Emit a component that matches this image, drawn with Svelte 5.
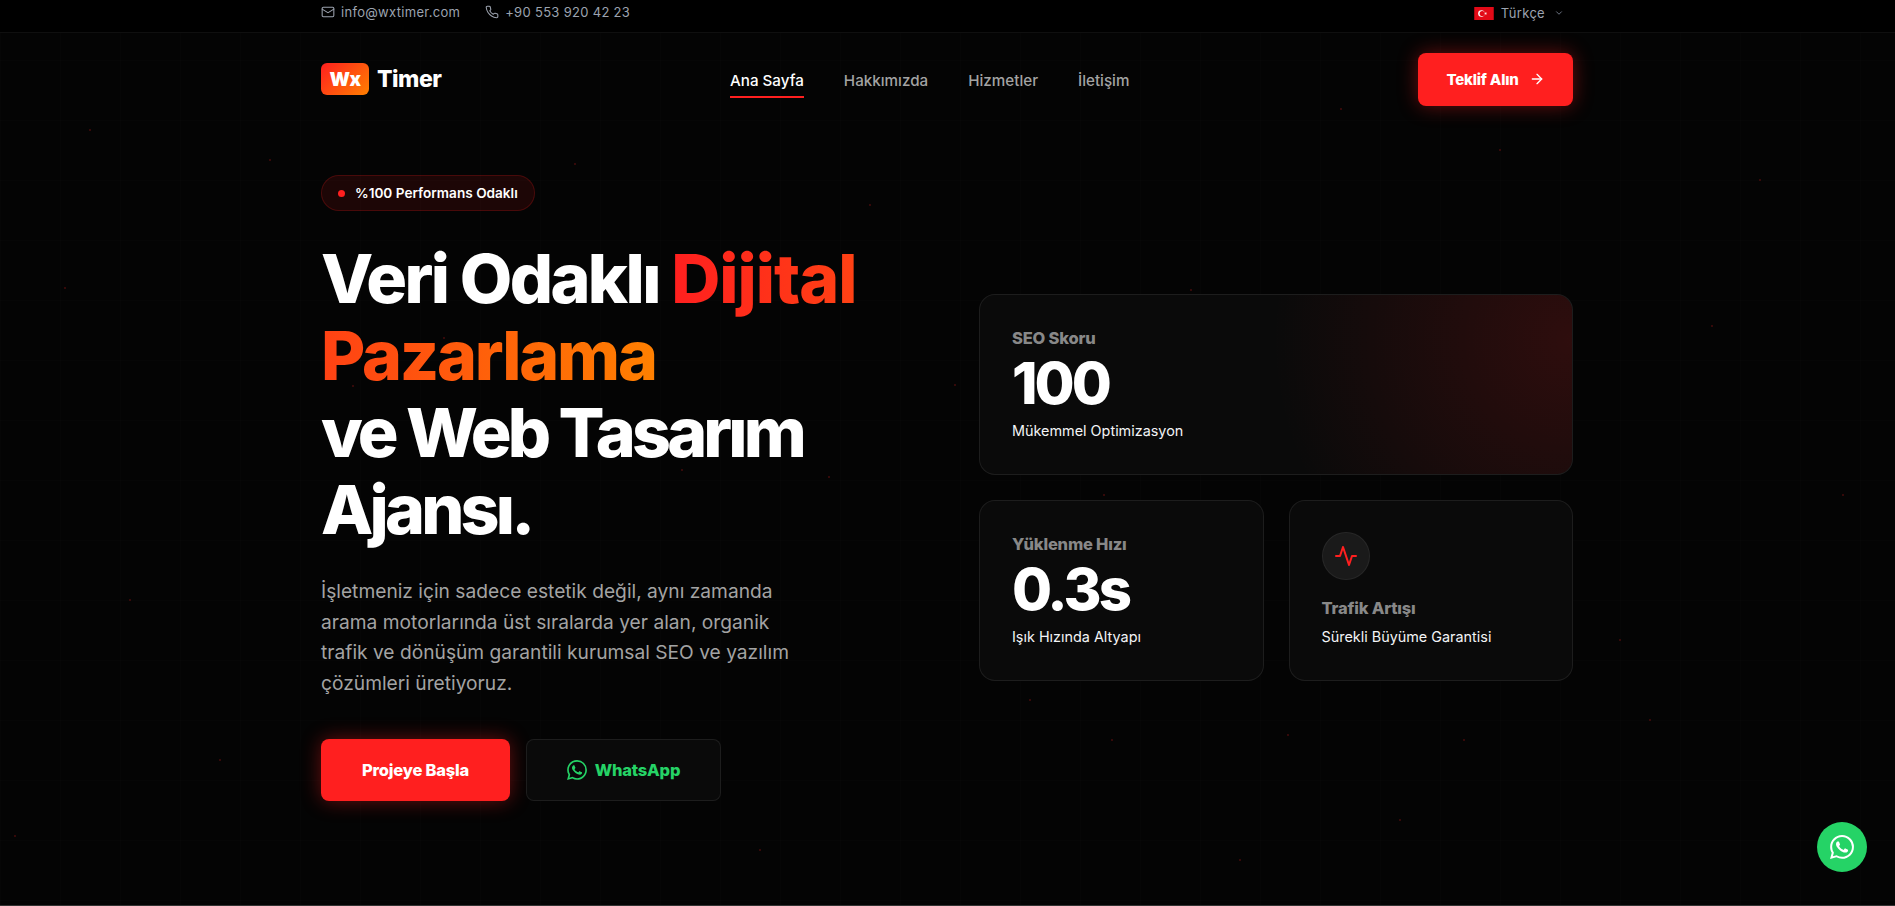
<script>
	const dots = [
		[270, 160], [65, 288], [955, 385], [1843, 495], [829, 477], [1712, 326], [1112, 740], [1288, 735],
		[1464, 740], [15, 836], [1341, 109], [1191, 290], [1104, 495], [1215, 528], [444, 338], [353, 386],
		[575, 164], [682, 470], [130, 600], [1650, 720], [1760, 180], [1500, 150], [1030, 700], [760, 850],
		[220, 760], [1240, 860], [1620, 640], [90, 130], [1400, 820], [870, 205]
	]
</script>

<div class="page">
	<svg class="particles" width="1895" height="906" aria-hidden="true">
		{#each dots as d}
			<circle cx={d[0]} cy={d[1]} r="0.8" fill="#ff1f1f" opacity="0.45" />
		{/each}
	</svg>

	<div class="topbar">
		<div class="wrap topbar-in">
			<div class="contacts">
				<span class="contact">
					<svg width="14" height="14" viewBox="0 0 24 24" fill="none" stroke="currentColor" stroke-width="1.8" stroke-linecap="round" stroke-linejoin="round"><rect x="2" y="4" width="20" height="16" rx="2" /><path d="m22 7-8.97 5.7a1.94 1.94 0 0 1-2.06 0L2 7" /></svg>
					info@wxtimer.com
				</span>
				<span class="contact">
					<svg width="14" height="14" viewBox="0 0 24 24" fill="none" stroke="currentColor" stroke-width="1.8" stroke-linecap="round" stroke-linejoin="round"><path d="M22 16.92v3a2 2 0 0 1-2.18 2 19.79 19.79 0 0 1-8.63-3.07 19.5 19.5 0 0 1-6-6 19.79 19.79 0 0 1-3.07-8.67A2 2 0 0 1 4.11 2h3a2 2 0 0 1 2 1.72 12.84 12.84 0 0 0 .7 2.81 2 2 0 0 1-.45 2.11L8.09 9.91a16 16 0 0 0 6 6l1.27-1.27a2 2 0 0 1 2.11-.45 12.84 12.84 0 0 0 2.81.7A2 2 0 0 1 22 16.92z" /></svg>
					+90 553 920 42 23
				</span>
			</div>
			<div class="lang">
				<svg class="flag" width="20" height="13" viewBox="0 0 30 20"><rect width="30" height="20" fill="#e30a17" /><circle cx="11" cy="10" r="5" fill="#fff" /><circle cx="12.3" cy="10" r="4" fill="#e30a17" /><path d="m15.2 10 4.4-1.4-2.7 3.7V7.7l2.7 3.7z" fill="#fff" /></svg>
				<span>Türkçe</span>
				<svg class="chev" width="10" height="10" viewBox="0 0 24 24" fill="none" stroke="currentColor" stroke-width="2.4" stroke-linecap="round" stroke-linejoin="round"><path d="m6 9 6 6 6-6" /></svg>
			</div>
		</div>
	</div>

	<header class="wrap nav">
		<div class="logo">
			<span class="logo-mark">Wx</span>
			<span class="logo-text">Timer</span>
		</div>
		<nav>
			<a class="active" href="#home">Ana Sayfa</a>
			<a href="#about">Hakkımızda</a>
			<a href="#services">Hizmetler</a>
			<a href="#contact">İletişim</a>
		</nav>
		<a class="cta" href="#quote">
			Teklif Alın
			<svg width="16" height="16" viewBox="0 0 24 24" fill="none" stroke="currentColor" stroke-width="2" stroke-linecap="round" stroke-linejoin="round"><path d="M5 12h14" /><path d="m12 5 7 7-7 7" /></svg>
		</a>
	</header>

	<main class="wrap hero">
		<section class="left">
			<div class="badge"><i class="dot"></i>%100 Performans Odaklı</div>
			<h1>Veri Odaklı <span class="grad"><span class="loose">Dijital</span> Pazarlama</span><br /><span class="rest">ve Web Tasarım Ajansı.</span></h1>
			<p class="lead">İşletmeniz için sadece estetik değil, aynı zamanda arama motorlarında üst sıralarda yer alan, organik trafik ve dönüşüm garantili kurumsal SEO ve yazılım çözümleri üretiyoruz.</p>
			<div class="actions">
				<a class="btn primary" href="#start">Projeye Başla</a>
				<a class="btn ghost" href="#wa">
					<svg width="20" height="20" viewBox="0 0 24 24" fill="currentColor"><path d="M17.472 14.382c-.297-.149-1.758-.867-2.03-.967-.273-.099-.471-.148-.67.15-.197.297-.767.966-.94 1.164-.173.199-.347.223-.644.075-.297-.15-1.255-.463-2.39-1.475-.883-.788-1.48-1.761-1.653-2.059-.173-.297-.018-.458.13-.606.134-.133.298-.347.446-.52.149-.174.198-.298.298-.497.099-.198.05-.371-.025-.52-.075-.149-.669-1.612-.916-2.207-.242-.579-.487-.5-.669-.51-.173-.008-.371-.01-.57-.01-.198 0-.52.074-.792.372-.272.297-1.04 1.016-1.04 2.479 0 1.462 1.065 2.875 1.213 3.074.149.198 2.096 3.2 5.077 4.487.709.306 1.262.489 1.694.625.712.227 1.36.195 1.871.118.571-.085 1.758-.719 2.006-1.413.248-.694.248-1.289.173-1.413-.074-.124-.272-.198-.57-.347m-5.421 7.403h-.004a9.87 9.87 0 01-5.031-1.378l-.361-.214-3.741.982.998-3.648-.235-.374a9.86 9.86 0 01-1.51-5.26c.001-5.45 4.436-9.884 9.888-9.884 2.64 0 5.122 1.03 6.988 2.898a9.825 9.825 0 012.893 6.994c-.003 5.45-4.437 9.884-9.885 9.884m8.413-18.297A11.815 11.815 0 0012.05 0C5.495 0 .16 5.335.157 11.892c0 2.096.547 4.142 1.588 5.945L.057 24l6.305-1.654a11.882 11.882 0 005.683 1.448h.005c6.554 0 11.89-5.335 11.893-11.893a11.821 11.821 0 00-3.48-8.413z" /></svg>
					WhatsApp
				</a>
			</div>
		</section>

		<section class="cards">
			<div class="card wide">
				<div class="label">SEO Skoru</div>
				<div class="value">100</div>
				<div class="sub">Mükemmel Optimizasyon</div>
			</div>
			<div class="card">
				<div class="label">Yüklenme Hızı</div>
				<div class="value">0.3s</div>
				<div class="sub">Işık Hızında Altyapı</div>
			</div>
			<div class="card">
				<div class="pulse">
					<svg width="24" height="24" viewBox="0 0 24 24" fill="none" stroke="#ff1f1f" stroke-width="2" stroke-linecap="round" stroke-linejoin="round"><polyline points="22 12 18 12 15 21 9 3 6 12 2 12" /></svg>
				</div>
				<div class="label">Trafik Artışı</div>
				<div class="sub near">Sürekli Büyüme Garantisi</div>
			</div>
		</section>
	</main>

	<a class="wa-float" href="#wa" aria-label="WhatsApp">
		<svg width="24" height="24" viewBox="0 0 24 24" fill="#fff"><path d="M17.472 14.382c-.297-.149-1.758-.867-2.03-.967-.273-.099-.471-.148-.67.15-.197.297-.767.966-.94 1.164-.173.199-.347.223-.644.075-.297-.15-1.255-.463-2.39-1.475-.883-.788-1.48-1.761-1.653-2.059-.173-.297-.018-.458.13-.606.134-.133.298-.347.446-.52.149-.174.198-.298.298-.497.099-.198.05-.371-.025-.52-.075-.149-.669-1.612-.916-2.207-.242-.579-.487-.5-.669-.51-.173-.008-.371-.01-.57-.01-.198 0-.52.074-.792.372-.272.297-1.04 1.016-1.04 2.479 0 1.462 1.065 2.875 1.213 3.074.149.198 2.096 3.2 5.077 4.487.709.306 1.262.489 1.694.625.712.227 1.36.195 1.871.118.571-.085 1.758-.719 2.006-1.413.248-.694.248-1.289.173-1.413-.074-.124-.272-.198-.57-.347m-5.421 7.403h-.004a9.87 9.87 0 01-5.031-1.378l-.361-.214-3.741.982.998-3.648-.235-.374a9.86 9.86 0 01-1.51-5.26c.001-5.45 4.436-9.884 9.888-9.884 2.64 0 5.122 1.03 6.988 2.898a9.825 9.825 0 012.893 6.994c-.003 5.45-4.437 9.884-9.885 9.884m8.413-18.297A11.815 11.815 0 0012.05 0C5.495 0 .16 5.335.157 11.892c0 2.096.547 4.142 1.588 5.945L.057 24l6.305-1.654a11.882 11.882 0 005.683 1.448h.005c6.554 0 11.89-5.335 11.893-11.893a11.821 11.821 0 00-3.48-8.413z" /></svg>
	</a>
</div>

<style>
	:global(body) {
		margin: 0;
		background: #050505;
		overflow: hidden;
	}

	.page {
		position: relative;
		height: 905px;
		overflow: hidden;
		border-bottom: 1px solid #333;
		background-color: #040404;
		background-image:
			linear-gradient(rgba(255, 255, 255, 0.006) 1px, transparent 1px),
			linear-gradient(90deg, rgba(255, 255, 255, 0.006) 1px, transparent 1px);
		background-size: 60px 60px;
		font-family: Inter, 'Liberation Sans', sans-serif;
		color: #fff;
	}

	.particles {
		position: absolute;
		inset: 0;
	}

	a {
		color: inherit;
		text-decoration: none;
	}

	.wrap {
		position: relative;
		margin: 0 322px 0 321px;
	}

	.topbar {
		height: 32px;
		border-bottom: 1px solid rgba(255, 255, 255, 0.06);
		background: #000;
		position: relative;
	}

	.topbar-in {
		display: flex;
		align-items: center;
		justify-content: space-between;
		height: 24px;
		font-size: 13px;
		letter-spacing: 0.3px;
		color: #9ca3af;
	}

	.contacts {
		display: flex;
		gap: 25px;
	}

	.contact {
		display: flex;
		align-items: center;
		gap: 6px;
	}

	.lang {
		display: flex;
		align-items: center;
		gap: 7px;
		padding-right: 9px;
		padding-top: 2px;
	}

	.chev {
		margin-left: 2px;
		color: #6b7280;
	}

	.nav {
		display: flex;
		align-items: center;
		justify-content: space-between;
		height: 92px;
	}

	.logo {
		display: flex;
		align-items: center;
		gap: 8px;
	}

	.logo-mark {
		display: flex;
		align-items: center;
		justify-content: center;
		width: 48px;
		height: 32px;
		border-radius: 6px;
		background: linear-gradient(135deg, #ff1f1f, #ff8000);
		font-weight: 900;
		font-size: 19px;
		letter-spacing: -0.5px;
	}

	.logo-text {
		font-weight: 800;
		font-size: 23px;
		letter-spacing: -0.5px;
	}

	nav {
		display: flex;
		gap: 40px;
		font-size: 15.2px;
		font-weight: 500;
		color: #a3a3a3;
	}

	nav a {
		padding: 10px 0 6px;
		border-bottom: 2px solid transparent;
	}

	nav a.active {
		color: #fff;
		border-bottom-color: #ff1f1f;
	}

	.cta {
		display: flex;
		align-items: center;
		justify-content: center;
		gap: 10px;
		width: 155px;
		height: 53px;
		box-sizing: border-box;
		border-radius: 8px;
		background: #ff1f1f;
		font-weight: 800;
		font-size: 15px;
		letter-spacing: -0.2px;
		box-shadow: 0 0 20px rgba(255, 31, 31, 0.4);
	}

	.hero {
		display: grid;
		grid-template-columns: 1fr 1fr;
		gap: 64px;
		align-items: center;
		margin-top: 50px;
	}

	.badge {
		display: inline-flex;
		align-items: center;
		gap: 10px;
		height: 36px;
		box-sizing: border-box;
		padding: 0 16px;
		border-radius: 18px;
		border: 1px solid rgba(255, 31, 31, 0.2);
		background: rgba(255, 31, 31, 0.1);
		font-size: 13.6px;
		font-weight: 600;
	}

	.dot {
		width: 7px;
		height: 7px;
		border-radius: 50%;
		background: #ff1f1f;
	}

	h1 {
		margin: 29px 0 28px;
		font-weight: 800;
		font-size: 68px;
		line-height: 77px;
		letter-spacing: -2.6px;
	}

	.grad {
		background: linear-gradient(90deg, #ff1f1f, #ff8000);
		-webkit-background-clip: text;
		background-clip: text;
		color: transparent;
		letter-spacing: -2.2px;
	}

	.loose {
		letter-spacing: -1px;
	}

	.rest {
		letter-spacing: -3.8px;
	}

	.lead {
		margin: 0 0 40px;
		max-width: 480px;
		font-size: 19.2px;
		line-height: 30.7px;
		color: #a3a3a3;
	}

	.actions {
		display: flex;
		gap: 16px;
	}

	.btn {
		display: flex;
		align-items: center;
		justify-content: center;
		gap: 8px;
		height: 62px;
		box-sizing: border-box;
		border-radius: 8px;
		font-weight: 800;
		font-size: 16.5px;
		letter-spacing: -0.2px;
	}

	.primary {
		width: 189px;
		background: #ff1f1f;
		box-shadow: 0 0 20px rgba(255, 31, 31, 0.4);
	}

	.ghost {
		width: 195px;
		background: #0a0a0a;
		border: 1px solid rgba(255, 255, 255, 0.08);
		color: #25d366;
	}

	.cards {
		display: grid;
		grid-template-columns: 1fr 1fr;
		gap: 25px;
	}

	.card {
		position: relative;
		overflow: hidden;
		height: 181px;
		box-sizing: border-box;
		padding: 31px 32px 32px;
		border-radius: 16px;
		border: 1px solid rgba(255, 255, 255, 0.08);
		background: #0a0a0a;
	}

	.wide {
		grid-column: span 2;
	}

	.wide::after {
		content: '';
		position: absolute;
		inset: 0;
		background: radial-gradient(circle 300px at 100% 25%, rgba(255, 31, 31, 0.15), transparent);
	}

	.label {
		font-weight: 800;
		font-size: 16.5px;
		letter-spacing: -0.2px;
		line-height: 24px;
		color: #888;
	}

	.value {
		margin-top: 3px;
		font-weight: 800;
		font-size: 58px;
		letter-spacing: -3px;
		line-height: 60px;
	}

	.sub {
		margin-top: 8px;
		font-size: 14.4px;
		line-height: 20px;
		color: #f3f4f6;
	}

	.sub.near {
		margin-top: 7px;
	}

	.pulse {
		display: flex;
		align-items: center;
		justify-content: center;
		width: 48px;
		height: 48px;
		box-sizing: border-box;
		border-radius: 50%;
		background: #1a1a1a;
		border: 1px solid rgba(255, 255, 255, 0.06);
		margin-bottom: 16px;
	}

	.wa-float {
		position: absolute;
		left: 1817px;
		top: 822px;
		display: flex;
		align-items: center;
		justify-content: center;
		width: 50px;
		height: 50px;
		border-radius: 50%;
		background: #25d366;
	}
</style>
